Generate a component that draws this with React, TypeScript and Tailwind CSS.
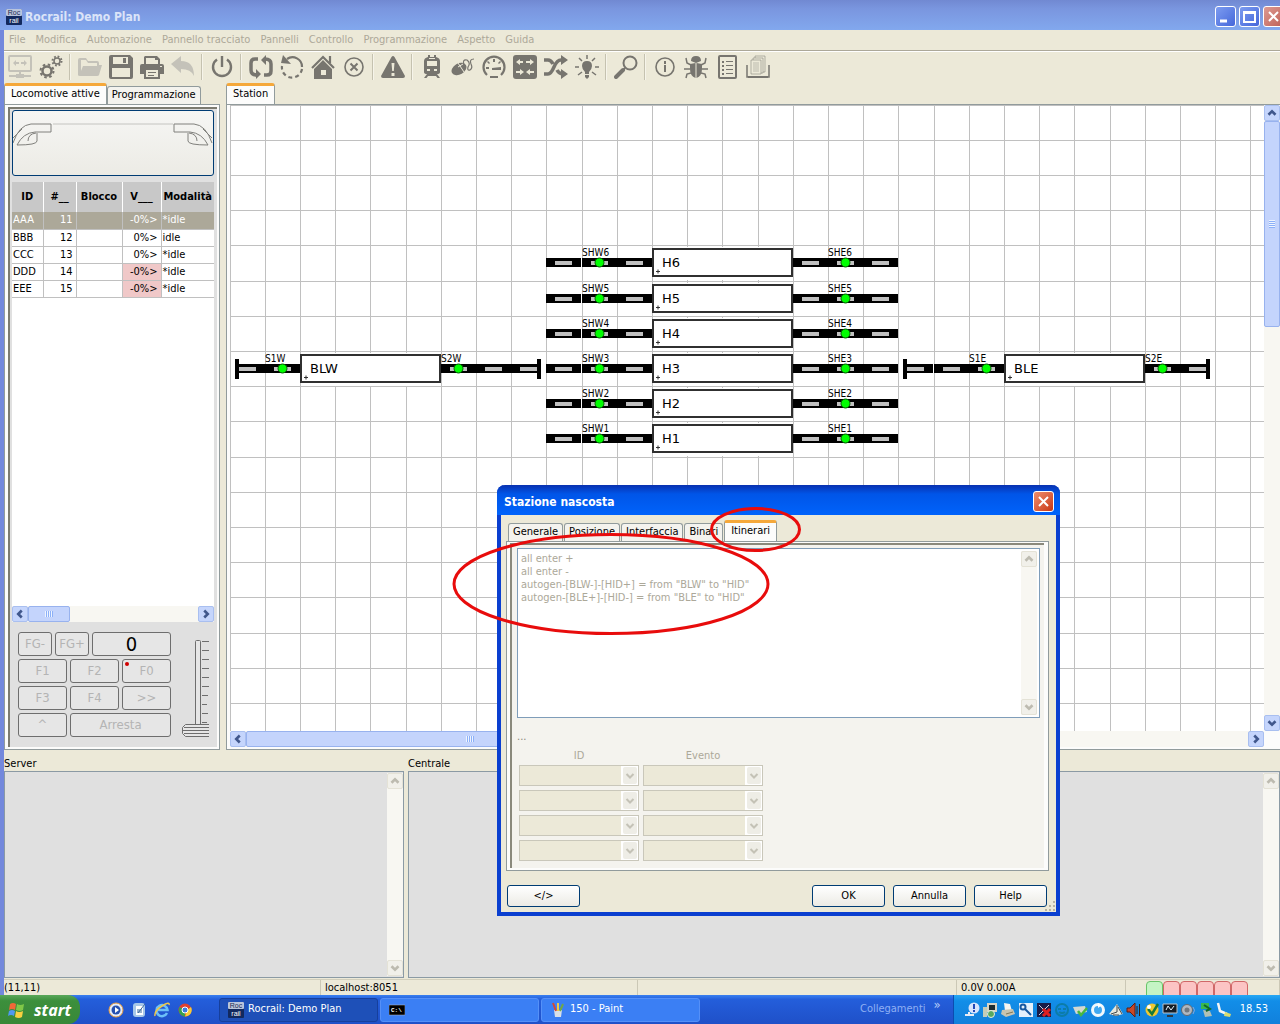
import type { ReactNode } from 'react';
import clsx from 'clsx';

const CELL = 35.2;
const cell = (n: number) => Math.floor(n * CELL);

const menus = ['File', 'Modifica', 'Automazione', 'Pannello tracciato', 'Pannelli', 'Controllo', 'Programmazione', 'Aspetto', 'Guida'];

const locos = [
  { id: 'AAA', addr: 11, v: '-0%>', mode: '*idle', selected: true },
  { id: 'BBB', addr: 12, v: '0%>', mode: 'idle' },
  { id: 'CCC', addr: 13, v: '0%>', mode: '*idle' },
  { id: 'DDD', addr: 14, v: '-0%>', mode: '*idle', reverse: true },
  { id: 'EEE', addr: 15, v: '-0%>', mode: '*idle', reverse: true },
];

const routes = `all enter +
all enter -
autogen-[BLW-]-[HID+] = from "BLW" to "HID"
autogen-[BLE+]-[HID-] = from "BLE" to "HID"`;

/* ---------- toolbar ---------- */

type Tool = { name: string; off?: boolean; art: ReactNode };

const line = { fill: 'none', stroke: 'currentColor', strokeWidth: 2 };

const toolGroups: Tool[][] = [
  [
    {
      name: 'Connetti',
      off: true,
      art: (
        <>
          <rect x="1" y="1" width="22" height="15" rx="1" {...line} />
          <path d="M5 8l3-3v2h3v2H8v2zM19 8l-3-3v2h-3v2h3v2z" />
          <path d="M11 16h2v4h-2zM1 20h22v2H1zM8 19h8v4H8z" />
        </>
      ),
    },
    {
      name: 'Proprietà',
      art: (
        <>
          <circle cx="8" cy="16" r="4.5" {...line} strokeWidth="2.5" />
          <circle cx="8" cy="16" r="6.5" {...line} strokeDasharray="2.55 2.55" />
          <circle cx="18" cy="6" r="3" {...line} strokeWidth="1.5" />
          <circle cx="18" cy="6" r="4.5" {...line} strokeDasharray="1.77 1.77" />
        </>
      ),
    },
  ],
  [
    {
      name: 'Apri',
      off: true,
      art: <path d="M0 20V5q0-2 2-2h6l2 3h9q2 0 2 2v2h3l-3 10q-.5 1-2 1H2q-2 0-2-1zM3 16l2-5h14V8H10L8 5H3z" fillRule="evenodd" />,
    },
    {
      name: 'Salva',
      art: <path d="M3 0h18l3 3v19q0 2-2 2H2q-2 0-2-2V2q0-2 2-2zM4 2v7h15V2zm10 1h3v5h-3zM3 13v9h18v-9z" fillRule="evenodd" />,
    },
    {
      name: 'Stampa',
      art: (
        <>
          <path d="M5 1h12l3 3v5H4V2zM6 3v6h12V5h-3V3z" fillRule="evenodd" />
          <path d="M2 9h20q2 0 2 2v8h-4v-5H4v5H0v-8q0-2 2-2zm18 2v1h2v-1z" fillRule="evenodd" />
          <path d="M5 14h14v9H5z" {...line} />
          <path d="M8 17h8v1H8zM8 20h6v1H8z" />
        </>
      ),
    },
    { name: 'Annulla modifica', off: true, art: <path d="M0 9l10-8v5q13 0 13 15-3-7-13-7v4z" /> },
  ],
  [
    {
      name: 'Alimentazione',
      art: (
        <>
          <path d="M7 4.5a9 9 0 1 0 10 0" {...line} strokeWidth="2.4" />
          <path d="M10.8 1h2.4v11h-2.4z" />
        </>
      ),
    },
  ],
  [
    {
      name: 'Automatico',
      art: (
        <>
          <path d="M9 4H6Q2 4 2 8v7q0 5 6 5M15 20h3q4 0 4-4V9q0-5-6-5" {...line} strokeWidth="3.5" />
          <path d="M7 14l5 5-5 5zM17 0l-5 5 5 5z" />
        </>
      ),
    },
    {
      name: 'Ripristina',
      art: (
        <>
          <path d="M7 4a9.500 9.500 0 0 1 15 8" {...line} strokeWidth="2.200" />
          <path d="M22 14a10 10 0 0 1-20-3" {...line} strokeWidth="2.200" strokeDasharray="4 3" />
          <path d="M3 0L1 8l10 1z" />
        </>
      ),
    },
    {
      name: 'Casa',
      art: (
        <>
          <path d="M1 13L12 2l11 11M19 1v7" {...line} strokeWidth="2.200" />
          <path d="M3 14l9-9 9 9v10H3zM10 15v5h5v-5z" fillRule="evenodd" />
        </>
      ),
    },
    {
      name: 'Interrompi',
      art: (
        <>
          <circle cx="12" cy="12" r="9" {...line} strokeWidth="1.600" />
          <path d="M8.500 8.500l7 7M15.500 8.500l-7 7" {...line} />
        </>
      ),
    },
  ],
  [
    {
      name: 'Emergenza',
      art: <path d="M10.500 2q1.500-2 3 0L24 21q0 2-2 2H2q-2 0-2-2zM10.500 8l.7 8h1.600l.7-8zM10.500 18v3h3v-3z" fillRule="evenodd" />,
    },
  ],
  [
    {
      name: 'Locomotive',
      art: (
        <path
          d="M8 0h2v2h4V0h2v2q4 1 4 4v11q0 2-3 2l3 4h-2.500L16 21H8l-1.500 2H4l3-4q-3 0-3-2V6q0-3 4-4zM7 6v5h10V6zM9 3v1h6V3zM7 14v2h3v-2zm7 0v2h3v-2z"
          fillRule="evenodd"
        />
      ),
    },
    {
      name: 'Comando',
      art: (
        <>
          <ellipse cx="8" cy="14" rx="8" ry="5.500" transform="rotate(-30 8 14)" />
          <path d="M13 10q-2-6 3-5 4 3 1 7-1 4 2 3 3-2 1-6-2-5 3-5" {...line} strokeWidth="1.200" />
          <path d="M7 8l6 9M7 12l5-3" stroke="#ece9d8" strokeWidth="1" />
        </>
      ),
    },
    {
      name: 'Velocità',
      art: (
        <>
          <path d="M5 20a10.500 10.500 0 1 1 14 0" {...line} strokeWidth="2.200" />
          <path d="M10 13l9-1v3h-9zM8 21h8v2H8zM11 4h2v3h-2zM4 12h3v2H4zM6 6l2 2-1 1-2-2zM18 6l-2 2 1 1 2-2z" />
        </>
      ),
    },
    {
      name: 'Scambi',
      art: (
        <>
          <rect width="24" height="24" rx="3" />
          <path d="M3 7l4-3v2h3v2H7v2zM13 6h4V4l4 3-4 3V8h-4zM3 16h4v-2l4 3-4 3v-2H3zM13 17l4-3v2h4v2h-4v2z" fill="#ece9d8" />
        </>
      ),
    },
    {
      name: 'Itinerari',
      art: (
        <>
          <path d="M0 5h4q3 0 5 4M13 15q2 4 7 4M0 19h4q3 0 6-7t7-7h2" {...line} strokeWidth="3.500" />
          <path d="M17 0l7 5-7 5zM17 14l7 5-7 5z" />
        </>
      ),
    },
    {
      name: 'Uscite',
      art: (
        <>
          <path d="M12 6q5 0 5 5 0 3-3 6v2h-4v-2q-3-3-3-6 0-5 5-5zM10 20h4v2l-2 2-2-2z" />
          <path d="M12 0v4M4 3l3 3M20 3l-3 3M0 12h4M24 12h-4M3 20l4-3M21 20l-4-3" {...line} strokeWidth="1.500" />
        </>
      ),
    },
  ],
  [
    {
      name: 'Cerca',
      art: (
        <>
          <circle cx="16" cy="8" r="6.500" {...line} />
          <path d="M11 13l-3 3" {...line} />
          <path d="M9 15L2 22" {...line} strokeWidth="4" strokeLinecap="round" />
        </>
      ),
    },
  ],
  [
    {
      name: 'Informazioni',
      art: (
        <>
          <circle cx="12" cy="12" r="9" {...line} strokeWidth="1.600" />
          <path d="M11 6h2v3h-2zM11 10h2v7h-2z" />
        </>
      ),
    },
    {
      name: 'Debug',
      art: (
        <>
          <path d="M7 6q0-5 5-5t5 5l-5 2zM6 9l5.500-1v15Q6 21 6 14zM18 9l-5.500-1v15Q18 21 18 14z" />
          <path d="M7 10L3 8 2 3M17 10l4-2 1-5M6 14H0M18 14h6M7 18l-4 1-1 4M17 18l4 1 1 4" {...line} strokeWidth="1.500" />
        </>
      ),
    },
    {
      name: 'Registro',
      art: (
        <>
          <rect x="4" y="1" width="17" height="22" rx="1" {...line} />
          <path d="M7 6h2v2H7zM7 10h2v2H7zM7 14h2v2H7zM7 18h2v2H7zM11 6h7v1h-7zM11 10h7v1h-7zM11 14h7v1h-7zM11 18h7v1h-7z" />
        </>
      ),
    },
    {
      name: 'Documenti',
      art: (
        <>
          <path d="M1 10v12h22V10" {...line} strokeWidth="1.500" />
          <path d="M2 21h20v2H2z" />
          <path d="M5 5h10v14H5zM7 5V3h10v15h-2M9 3V1h10v16h-2" fill="none" stroke="currentColor" strokeWidth=".5" />
          <path d="M7 8h6M7 10h6M7 12h6M7 14h6M7 16h6" stroke="currentColor" strokeWidth=".4" />
        </>
      ),
    },
  ],
];

function Toolbar() {
  return (
    <div className="flex h-[31px] shrink-0 items-center overflow-hidden border-t border-white" role="toolbar">
      {toolGroups.map((group, i) => (
        <div key={i} className="flex items-center">
          {i > 0 && <div className="mx-[3px] h-[26px] w-0.5 border-l border-[#c5c2b0] bg-[#f6f4ea]" />}
          {group.map((tool) => (
            <button
              key={tool.name}
              aria-label={tool.name}
              disabled={tool.off}
              className={clsx('flex w-[31px] shrink-0 justify-center', tool.off ? 'text-[#c4c2b9]' : 'text-[#77756f]')}
            >
              <svg viewBox="0 0 24 24" className="size-6" fill="currentColor">
                {tool.art}
              </svg>
            </button>
          ))}
        </div>
      ))}
    </div>
  );
}

/* ---------- shared controls ---------- */

const chevrons = {
  up: 'M4 10l4-4 4 4',
  down: 'M4 6l4 4 4-4',
  left: 'M10 4L6 8l4 4',
  right: 'M6 4l4 4-4 4',
};

function ArrowButton({ dir, off }: { dir: keyof typeof chevrons; off?: boolean }) {
  return (
    <button
      aria-label={dir}
      disabled={off}
      className={clsx(
        'size-4 shrink-0 rounded-xs border',
        off ? 'border-[#e4e2d6] bg-[#f1f0ea] text-[#bdbbb0]' : 'border-[#a9bff0] bg-[#c5d5fc] text-[#40578c]',
      )}
    >
      <svg viewBox="0 0 16 16" className="size-full" fill="none" stroke="currentColor" strokeWidth="3">
        <path d={chevrons[dir]} />
      </svg>
    </button>
  );
}

function ScrollBar({ vertical, off, thumb }: { vertical?: boolean; off?: boolean; thumb?: string }) {
  return (
    <div className={clsx('flex shrink-0 bg-[#f8f7f2]', vertical ? 'w-4 flex-col' : 'h-4')}>
      <ArrowButton dir={vertical ? 'up' : 'left'} off={off} />
      <div className={clsx('flex min-h-0 min-w-0 flex-1', vertical && 'flex-col')}>
        {thumb && (
          <div className={clsx('flex items-center justify-center rounded-xs border border-[#98b2ee] bg-[#c4d4fc]', thumb)}>
            <svg viewBox="0 0 8 8" className={clsx('size-2', vertical && 'rotate-90')} stroke="#eef4fe">
              <path d="M.5 1v6M2.500 1v6M4.500 1v6M6.500 1v6" />
              <path d="M1.500 1v6M3.500 1v6M5.500 1v6M7.500 1v6" stroke="#8cb0f8" />
            </svg>
          </div>
        )}
      </div>
      <ArrowButton dir={vertical ? 'down' : 'right'} off={off} />
    </div>
  );
}

function Tab({ children, active }: { children: ReactNode; active?: boolean }) {
  return (
    <button
      role="tab"
      aria-selected={!!active}
      className={clsx(
        'rounded-t-[3px] border border-b-0 border-[#919b9c] whitespace-nowrap',
        active ? 'h-[21px] border-t-[3px] border-t-[#f5a83a] bg-[#fcfcfb] px-1.5 pb-1' : 'h-[18px] bg-[#f4f3ee] px-1',
      )}
    >
      {children}
    </button>
  );
}

function XpButton({ children }: { children: ReactNode }) {
  return (
    <button className="h-[22px] w-[73px] rounded-[3px] border border-[#003c74] bg-linear-to-b from-white to-[#ecebe5]">
      {children}
    </button>
  );
}

function RocrailIcon() {
  return (
    <svg viewBox="0 0 16 16" className="size-4 shrink-0" fontFamily="Liberation Sans" fontSize="7" textAnchor="middle">
      <rect width="16" height="16" rx="1" fill="#12295e" />
      <rect width="16" height="7" rx="1" fill="#b9c4dc" />
      <text x="8" y="6" fill="#1c2b52">Roc</text>
      <text x="8" y="14" fill="#fff">rail</text>
    </svg>
  );
}

/* ---------- left panel ---------- */

function LocoTable() {
  return (
    <table className="w-full table-fixed border-collapse">
      <thead>
        <tr className="h-[30px] bg-[#c8c8c8]">
          {[
            ['ID', 'w-[31px]'],
            ['#__', 'w-[33px]'],
            ['Blocco', 'w-[46px]'],
            ['V___', 'w-[39px]'],
            ['Modalità', 'w-[53px]'],
          ].map(([label, width]) => (
            <th key={label} className={clsx('border-r border-white p-0 text-center font-bold last:border-r-0', width)}>
              {label}
            </th>
          ))}
        </tr>
      </thead>
      <tbody>
        {locos.map((l) => (
          <tr
            key={l.id}
            className={clsx(
              'h-[17px] border-b border-[#c0c0c0] leading-4 *:border-r *:border-[#c0c0c0] *:p-0 *:last:border-r-0',
              l.selected && 'bg-[#aca899] text-white',
            )}
          >
            <td><span className="pl-px">{l.id}</span></td>
            <td className="text-right"><span className="pr-[3px]">{l.addr}</span></td>
            <td />
            <td className={clsx('text-right', l.reverse && 'bg-[#f0c8c8]')}><span className="pr-[3px]">{l.v}</span></td>
            <td><span className="pl-px">{l.mode}</span></td>
          </tr>
        ))}
      </tbody>
    </table>
  );
}

function Key({ children, className }: { children: ReactNode; className?: string }) {
  return (
    <button disabled className={clsx('relative h-6 rounded-[3px] border border-[#6e6e6e] bg-[#e6e6e6] text-[13px] text-[#b4b4b4]', className)}>
      {children}
    </button>
  );
}

function Throttle() {
  return (
    <div className="flex justify-between pt-2.5 pb-[9px] pl-1.5">
      <div className="flex w-[153px] flex-col gap-[3px]">
        <div className="flex gap-[3px]">
          <Key className="w-[34px]">FG-</Key>
          <Key className="w-[34px]">FG+</Key>
          <output className="flex h-6 flex-1 items-center justify-center rounded-[3px] border border-[#6e6e6e] bg-[#e6e6e6] text-xl">0</output>
        </div>
        <div className="grid grid-cols-3 gap-[3px]">
          <Key>F1</Key>
          <Key>F2</Key>
          <Key>
            F0
            <span className="absolute top-0.5 left-0.5 size-1 rounded-full bg-[#d00000]" />
          </Key>
          <Key>F3</Key>
          <Key>F4</Key>
          <Key>&gt;&gt;</Key>
          <Key>^</Key>
          <Key className="col-span-2">Arresta</Key>
        </div>
      </div>
      <div className="relative mt-2 mr-1.5 h-[98px] w-[27px]">
        <svg viewBox="0 0 27 98" className="size-full" fill="#e6e6e6" stroke="#6e6e6e">
          <rect x="13.5" y=".5" width="5" height="86" rx="1" />
          {Array.from({ length: 10 }, (_, i) => (
            <path key={i} d={`M20 ${i * 9 + 1.5}h${8 - (i % 2) * 1 - (i > 5 ? 2 : 0)}`} />
          ))}
          <path d="M27 84.500H3.500l-3 3v6l3 3H27M2 87.500h25M1 90.500h26M2 93.500h25" />
        </svg>
        <input
          type="range"
          aria-label="Velocità"
          defaultValue={0}
          className="absolute inset-0 h-full w-full appearance-none opacity-0 [writing-mode:vertical-lr] [direction:rtl]"
        />
      </div>
    </div>
  );
}

function LocoPanel() {
  return (
    <section className="flex w-[216px] shrink-0 flex-col">
      <div className="flex h-[21px] items-end" role="tablist">
        <Tab active>Locomotive attive</Tab>
        <Tab>Programmazione</Tab>
      </div>
      <div className="flex min-h-0 flex-1 flex-col border border-[#919b9c] bg-[#fcfcfb] p-0.5 pl-[3px]">
        <div className="flex min-h-0 flex-1 flex-col border-t-2 border-l-2 border-[#7c7b70] bg-[#e0e0e0] px-0.5 pt-px">
          <button
            aria-label="Immagine locomotiva"
            className="h-[66px] w-[202px] shrink-0 rounded-[3px] border border-[#003c74] bg-linear-to-b from-[#f6f6f4] to-[#ecebe5]"
          >
            <svg viewBox="0 0 200 64" className="h-16 w-full" fill="none" stroke="#80807c">
              <path d="M40 13h120" stroke="#c4c4c0" />
              <path d="M38 13H18Q6 14 0 32M38 13v8H22Q10 22 4 34q20 0 20-4v-8M9 18L0 27M15 30q0-7 8-8" />
              <path d="M161 13h20q12 1 18 19M161 13v8h16q12 1 18 13-20 0-20-4v-8M190 18l9 9M184 30q0-7-8-8" />
            </svg>
          </button>
          <div className="mt-1.5 mr-px flex min-h-0 flex-1 flex-col bg-white">
            <div className="min-h-0 flex-1 overflow-hidden">
              <LocoTable />
            </div>
            <ScrollBar thumb="w-[42px]" />
          </div>
          <Throttle />
        </div>
      </div>
    </section>
  );
}

/* ---------- track plan ---------- */

function Track({ x, y, end }: { x: number; y: number; end?: 'left' | 'right' }) {
  const left = end === 'left' ? x + 5 : x;
  return (
    <g>
      <rect x={left} y={y + 13} width={end ? 30 : 35} height="9" fill="#000" />
      <rect x={x + 9} y={y + 16} width="17" height="4" fill="#c0c0c0" />
      {end && <rect x={end === 'left' ? x + 5 : x + 26} y={y + 8} width="4" height="20" fill="#000" />}
    </g>
  );
}

function Sensor({ x, y, id }: { x: number; y: number; id: string }) {
  return (
    <g>
      <Track x={x} y={y} />
      <circle cx={x + 17.5} cy={y + 17.5} r="4.5" fill="#00ff00" stroke="#006000" />
      <text x={x} y={y + 11} fontSize="10">{id}</text>
    </g>
  );
}

function Block({ x, y, id }: { x: number; y: number; id: string }) {
  return (
    <g>
      <rect x={x + 1} y={y + 2} width="140" height="33" fill="#fff" />
      <rect x={x + 1} y={y + 4} width="139" height="27" fill="#fff" stroke="#303030" strokeWidth="2" />
      <text x={x + 10} y={y + 22} fontSize="13" fontFamily="DejaVu Sans">{id}</text>
      <path d={`M${x + 4} ${y + 26.5}h4M${x + 6} ${y + 24.5}v4`} stroke="#303030" />
    </g>
  );
}

function TrackPlan() {
  return (
    <svg className="min-h-0 w-full min-w-0 flex-1 bg-white">
      <g fill="#c0c0c0">
        {Array.from({ length: 60 }, (_, i) => (
          <g key={i}>
            <rect x={cell(i)} y="0" width="1" height="100%" />
            <rect x="0" y={cell(i)} width="100%" height="1" />
          </g>
        ))}
      </g>
      {[6, 5, 4, 3, 2, 1].map((n) => {
        const y = cell(10 - n);
        return (
          <g key={n}>
            <Track x={cell(9)} y={y} />
            <Track x={cell(11)} y={y} />
            <Sensor x={cell(10)} y={y} id={`SHW${n}`} />
            <Block x={cell(12)} y={y} id={`H${n}`} />
            <Track x={cell(16)} y={y} />
            <Track x={cell(18)} y={y} />
            <Sensor x={cell(17)} y={y} id={`SHE${n}`} />
          </g>
        );
      })}
      <Track x={0} y={cell(7)} end="left" />
      <Sensor x={cell(1)} y={cell(7)} id="S1W" />
      <Sensor x={cell(6)} y={cell(7)} id="S2W" />
      <Block x={cell(2)} y={cell(7)} id="BLW" />
      <Track x={cell(7)} y={cell(7)} />
      <Track x={cell(8)} y={cell(7)} end="right" />
      <Track x={cell(19)} y={cell(7)} end="left" />
      <Track x={cell(20)} y={cell(7)} />
      <Sensor x={cell(21)} y={cell(7)} id="S1E" />
      <Sensor x={cell(26)} y={cell(7)} id="S2E" />
      <Block x={cell(22)} y={cell(7)} id="BLE" />
      <Track x={cell(27)} y={cell(7)} end="right" />
    </svg>
  );
}

function PlanPanel() {
  return (
    <section className="flex min-w-0 flex-1 flex-col">
      <div className="flex h-[21px] items-end" role="tablist">
        <Tab active>Station</Tab>
      </div>
      <div className="flex min-h-0 flex-1 border border-r-0 border-[#919b9c] bg-[#fcfcfb] pb-0.5 pl-[3px]">
        <div className="flex min-w-0 flex-1 flex-col">
          <TrackPlan />
          <ScrollBar thumb="w-[448px]" />
        </div>
        <div className="mb-4 flex">
          <ScrollBar vertical thumb="h-[206px]" />
        </div>
      </div>
    </section>
  );
}

function LogPane({ title, className }: { title: string; className: string }) {
  return (
    <section className={clsx('flex flex-col', className)}>
      <h2 className="h-[14px] leading-[14px]">{title}</h2>
      <div className="flex flex-1 justify-end border border-[#8b9aa4] bg-[#e0e0e0] p-px pr-0">
        <ScrollBar vertical off />
      </div>
    </section>
  );
}

/* ---------- dialog ---------- */

function StationDialog() {
  return (
    <div
      role="dialog"
      aria-label="Stazione nascosta"
      className="absolute top-[485px] left-[497px] flex w-[563px] flex-col rounded-t-lg border-4 border-t-0 border-[#0a3fd0] bg-[#ece9d8]"
    >
      <div className="-mx-1 flex h-[30px] items-center justify-between rounded-t-lg bg-linear-to-b from-[#0831b0] via-[#0055e8] via-30% to-[#0063fb] pr-1.5 pl-[7px]">
        <h1 className="pt-1 text-xs leading-5 font-bold text-white">Stazione nascosta</h1>
        <button aria-label="Chiudi" className="mt-[3px] size-[21px] rounded-[3px] border border-white bg-linear-to-br from-[#ee8d6c] to-[#c8330c]">
          <svg viewBox="0 0 19 19" stroke="#fff" strokeWidth="2">
            <path d="M5 5l9 9M14 5l-9 9" />
          </svg>
        </button>
      </div>
      <div className="flex flex-col px-[5px] pt-[5px] pb-[5px]">
        <div className="flex h-[21px] items-end gap-px pl-0.5" role="tablist">
          <Tab>Generale</Tab>
          <Tab>Posizione</Tab>
          <Tab>Interfaccia</Tab>
          <Tab>Binari</Tab>
          <Tab active>Itinerari</Tab>
        </div>
        <div className="mr-0.5 border border-[#919b9c] bg-[#fcfcfb] pt-px pr-1 pb-0.5 pl-[3px]">
          <div className="border-t-2 border-l-2 border-[#8a897c] bg-[#f4f3ee] pt-[3px] pr-1 pb-[7px] pl-[5px]">
            <div className="flex h-[170px] border border-[#7f9db9] bg-white">
              <textarea
                disabled
                aria-label="Itinerari"
                defaultValue={routes}
                className="flex-1 resize-none overflow-hidden px-[3px] py-[3px] leading-[13px] text-[#aca899]"
              />
              <div className="m-0.5 flex">
                <ScrollBar vertical off />
              </div>
            </div>
            <p className="mt-3 h-4 leading-[14px] text-[#8a8878]">...</p>
            <div className="mt-[5px] grid w-[246px] grid-cols-2 gap-1 pl-0.5 text-center text-[#aca899]">
              <span className="leading-[10px]">ID</span>
              <span className="leading-[10px]">Evento</span>
              {Array.from({ length: 8 }, (_, i) => (
                <div key={i} className="relative h-[21px]">
                  <select
                    disabled
                    aria-label={`${i % 2 ? 'Evento' : 'ID'} ${Math.floor(i / 2) + 1}`}
                    className="size-full appearance-none border border-[#c9c7ba] bg-[#ece9d8] opacity-100"
                  />
                  <svg viewBox="0 0 17 19" className="pointer-events-none absolute top-px right-px h-[19px] w-[17px]">
                    <rect width="17" height="19" fill="#fff" />
                    <rect x="2" y="1" width="14" height="17" rx="2" fill="#eeede6" />
                    <path d="M5.500 8l3.500 3.500L12.500 8" fill="none" stroke="#c4c2b6" strokeWidth="2" />
                  </svg>
                </div>
              ))}
            </div>
          </div>
        </div>
        <div className="mt-[14px] flex gap-2 px-px pr-1">
          <XpButton>&lt;/&gt;</XpButton>
          <div className="flex-1" />
          <XpButton>OK</XpButton>
          <XpButton>Annulla</XpButton>
          <XpButton>Help</XpButton>
        </div>
      </div>
      <svg viewBox="0 0 12 12" className="absolute right-0 bottom-0 size-3" fill="#b8b4a2">
        <path d="M9 1h2v2H9zM5 5h2v2H5zM9 5h2v2H9zM1 9h2v2H1zM5 9h2v2H5zM9 9h2v2H9z" />
      </svg>
    </div>
  );
}

/* Hand-drawn marks around the tab and the generated routes */
function Highlights() {
  return (
    <svg viewBox="0 0 350 130" className="pointer-events-none absolute top-[505px] left-[452px] h-[130px] w-[350px]" fill="none" stroke="#e80c0c" strokeWidth="3">
      <ellipse cx="159" cy="79" rx="157" ry="49.5" />
      <ellipse cx="303.500" cy="24.500" rx="44" ry="21" />
    </svg>
  );
}

/* ---------- window frame and taskbar ---------- */

function CaptionButton({ label, close, children }: { label: string; close?: boolean; children: ReactNode }) {
  return (
    <button
      aria-label={label}
      className={clsx(
        'size-[21px] shrink-0 rounded-[3px] border border-white bg-linear-to-br',
        close ? 'from-[#dd9a92] to-[#bf6157]' : 'from-[#7d9cf0] to-[#4667da]',
      )}
    >
      <svg viewBox="0 0 19 19" fill="none" stroke="#fff" strokeWidth="2">{children}</svg>
    </button>
  );
}

function TitleBar() {
  return (
    <header className="flex h-[30px] shrink-0 items-center gap-[3px] overflow-hidden bg-linear-to-b from-[#7189d2] via-[#7a96df] via-30% to-[#82a8ee] pt-[3px] pl-1.5">
      <RocrailIcon />
      <h1 className="flex-1 text-xs leading-5 font-bold text-[#dbe4f8]">Rocrail: Demo Plan</h1>
      <div className="-mr-1 flex gap-[3px]">
        <CaptionButton label="Riduci"><path d="M4 14h7" strokeWidth="3" /></CaptionButton>
        <CaptionButton label="Ingrandisci"><path d="M4 5h11v10H4zM4 6h11" /></CaptionButton>
        <CaptionButton label="Chiudi" close><path d="M5 5l9 9M14 5l-9 9" /></CaptionButton>
      </div>
    </header>
  );
}

function StatusBar() {
  return (
    <footer className="mt-px grid h-4 shrink-0 grid-cols-[317fr_317fr_319fr_169fr_154fr] border-t border-[#d2cfbc] leading-4 whitespace-nowrap *:border-r *:border-[#cbc8b6] *:pl-1 *:first:pl-0">
      <div>(11,11)</div>
      <div>localhost:8051</div>
      <div />
      <div>0.0V 0.00A</div>
      <div className="flex overflow-hidden">
        <div className="flex pt-px pl-4">
          <span className="h-5 w-[17px] rounded-[4px] border border-[#68c468] bg-[#c4f4c4]" />
          {[1, 2, 3, 4, 5].map((n) => (
            <span key={n} className="h-5 w-[17px] rounded-[4px] border border-[#d06868] bg-[#fcc4c4]" />
          ))}
        </div>
      </div>
    </footer>
  );
}

const quickLaunch: [string, ReactNode][] = [
  ['Media Player', <><circle cx="8" cy="8" r="7" fill="#e4ecf8" stroke="#e79a3c" /><circle cx="8" cy="8" r="4.500" fill="#2550b0" /><path d="M7 5l4 3-4 3z" fill="#fff" /></>],
  ['Mostra desktop', <><rect x="2" y="1" width="12" height="14" rx="3" fill="#a8c8e8" /><path d="M5 4h7v9H5z" fill="#fff" /><path d="M6 8h5M6 10h5M7 11l7-9" stroke="#38689c" /></>],
  ['Internet Explorer', <><path d="M13 11a5.500 5.500 0 1 1 .5-3H4" fill="none" stroke="#6cc0f8" strokeWidth="2.500" /><path d="M1 14Q0 9 8 4t7-1" fill="none" stroke="#f0c848" strokeWidth="1.500" /></>],
  ['Chrome', <><circle cx="8" cy="8" r="6.500" fill="#e04030" /><path d="M2.500 5L8 8v6.500A6.500 6.500 0 0 1 2.500 5z" fill="#38a050" /><path d="M8 14.500L10 8l4-3a6.500 6.500 0 0 1-6 9.500z" fill="#f8cc38" /><circle cx="8" cy="8" r="3" fill="#3c7ce0" stroke="#fff" /></>],
];

const trayIcons: [string, ReactNode][] = [
  ['Notifica', <><circle cx="10" cy="6" r="5.500" fill="#d8e4fc" /><path d="M10 2v5M10 8v2" stroke="#2048b8" strokeWidth="2" /><path d="M1 13h9M5 10v4" stroke="#e8ecf4" strokeWidth="2" /></>],
  ['Installazione', <><path d="M5 1h10v9H5z" fill="#d8d4c4" /><path d="M7 3h6v5H7z" fill="#1c2c30" /><path d="M1 5h4v10H1z" fill="#c4ccb8" /><circle cx="9" cy="12" r="3.500" fill="#58a860" stroke="#e8f0e0" /></>],
  ['Stampante', <><path d="M4 1l6 1 2 7H5z" fill="#f4f4f0" /><path d="M2 8l11-1 2 5-9 3-5-3z" fill="#c8c4b0" /><path d="M6 12l7-2" stroke="#807858" /></>],
  ['Chiave', <><rect x="1" y="1" width="14" height="14" fill="#e4f0fc" /><circle cx="5" cy="5" r="2.500" fill="none" stroke="#1858a0" strokeWidth="2" /><path d="M7 7l6 6" stroke="#1858a0" strokeWidth="2" /></>],
  ['Monitor', <><rect x="1" y="1" width="14" height="14" fill="#181c48" /><path d="M3 3l10 10M13 3L3 13" stroke="#d0d0e0" /><path d="M7 7l7 7M14 7l-7 7" stroke="#e02020" strokeWidth="3" /></>],
  ['Rete inattiva', <g fill="none" stroke="#0c7ca8" strokeWidth="2"><circle cx="8" cy="8" r="6" /><path d="M4 7h3M9 7h3M5 10q3 2 6 0" /></g>],
  ['Disco', <><path d="M1 5l12-1 2 6-11 2z" fill="#d4d8d0" /><path d="M6 9l3 4 6-7" stroke="#48b840" strokeWidth="2.500" fill="none" /></>],
  ['Aggiornamenti', <><circle cx="8" cy="8" r="5.500" fill="#40a8f0" stroke="#f0f8fc" strokeWidth="3" /><path d="M8 1l4 2-4 3z" fill="#fff" /></>],
  ['Scheda', <><path d="M1 12L9 2l6 10-7 2z" fill="#e8e8dc" /><path d="M9 3v7l-6 2M10 5l4 7M5 13h6" stroke="#40484c" fill="none" /></>],
  ['Audio', <><path d="M1 6h3l5-5v14l-5-5H1z" fill="#c84828" stroke="#601c10" /><path d="M11 4v8M13.500 2v12" stroke="#342018" /></>],
  ['Antivirus', <><circle cx="8" cy="8" r="6.500" fill="#f0c830" /><path d="M4 7l4 5 6-10" stroke="#187838" strokeWidth="2.500" fill="none" /><circle cx="5" cy="5" r="2" fill="#fff" /></>],
  ['Schermo', <><path d="M1 2h14v9H1z" fill="#141c24" stroke="#b8c0c8" /><path d="M4 8l2-4 3 4 3-4" stroke="#e8f4fc" fill="none" /><path d="M5 14h6" stroke="#303840" strokeWidth="2" /></>],
  ['Volume', <><circle cx="7" cy="8" r="5.500" fill="#b0b8c0" stroke="#606870" /><circle cx="7" cy="8" r="2.500" fill="#707880" /><path d="M13 5q3 3 0 7" stroke="#88a8d8" fill="none" /></>],
  ['Rimozione sicura', <><path d="M3 1h8v6H3z" fill="#38b850" /><path d="M5 8l7 1 2 5-7 1z" fill="#b0c0b4" /><path d="M6 3l6 4-4 2" stroke="#106828" fill="none" strokeWidth="2" /></>],
  ['Alimentazione', <><path d="M2 1l2 8 7 3" stroke="#f4f4f4" strokeWidth="2.500" fill="none" /><path d="M9 10l6 2-1 3-6-1z" fill="#d8dc70" /></>],
];

function TaskButton({ active, children }: { active?: boolean; children: ReactNode }) {
  return (
    <button
      className={clsx(
        'flex h-6 w-[159px] items-center gap-1 rounded-[3px] border px-2 text-left text-white',
        active ? 'border-[#163f9c] bg-[#1e50b8]' : 'border-[#5590f8] bg-[#3b7ff4]',
      )}
    >
      {children}
    </button>
  );
}

function Taskbar() {
  return (
    <nav className="flex h-[29px] shrink-0 items-center bg-linear-to-b from-[#3a80f0] via-[#245edb] via-15% to-[#1f50c8]">
      <button className="flex h-full w-20 items-center gap-2 rounded-r-xl bg-linear-to-b from-[#5aa85a] via-[#3c8f3c] via-20% to-[#388838] pl-2 font-['Open_Sans',sans-serif] text-base leading-5 font-bold text-white italic">
        <svg viewBox="0 0 18 18" className="size-[18px]">
          <path d="M2 3q3-2 6 0L7 9Q4 7 1 9z" fill="#f06838" />
          <path d="M9 3q3 2 7 0l-1 6q-3 2-7 0z" fill="#80c848" />
          <path d="M1 10q3-2 6 0l-1 5q-3-2-6 0z" fill="#5098f0" />
          <path d="M8 10q3 2 7 0l-1 6q-3 2-7 0z" fill="#f8d040" />
        </svg>
        start
      </button>
      <div className="ml-7 flex w-[111px] gap-[7px]">
        {quickLaunch.map(([name, art]) => (
          <button key={name} aria-label={name}>
            <svg viewBox="0 0 16 16" className="size-4">{art}</svg>
          </button>
        ))}
      </div>
      <div className="flex flex-1 gap-0.5">
        <TaskButton active><RocrailIcon />Rocrail: Demo Plan</TaskButton>
        <TaskButton>
          <svg viewBox="0 0 16 16" className="size-4" aria-label="Prompt dei comandi">
            <rect y="3" width="16" height="10" fill="#000" stroke="#b8b8b8" strokeWidth=".5" />
            <text x="2" y="10" fill="#fff" fontSize="6" fontFamily="Liberation Mono" fontWeight="bold">C:\</text>
          </svg>
        </TaskButton>
        <TaskButton>
          <svg viewBox="0 0 16 16" className="size-4">
            <path d="M4 8h8l-1 7H5z" fill="#d8e0e8" />
            <path d="M6 9L3 1" stroke="#d84830" strokeWidth="2" />
            <path d="M8 9V1" stroke="#f0c848" strokeWidth="2" />
            <path d="M10 9l3-7" stroke="#70a848" strokeWidth="2" />
          </svg>
          150 - Paint
        </TaskButton>
      </div>
      <span className="text-[#8fb0f4]">Collegamenti</span>
      <span className="mr-3 ml-2 pb-2.5 text-[13px] text-[#b4ccf8]">»</span>
      <div className="flex h-full items-center gap-0.5 border-l border-[#0c4cb0] bg-linear-to-b from-[#28a8f4] via-[#128ee8] via-20% to-[#1180dc] pr-3 pl-2.5 text-white">
        {trayIcons.map(([name, art]) => (
          <svg key={name} viewBox="0 0 16 16" className="size-4" role="img" aria-label={name}>{art}</svg>
        ))}
        <time className="pl-1.5">18.53</time>
      </div>
    </nav>
  );
}

export default function App() {
  return (
    <div className="relative flex h-screen flex-col overflow-hidden bg-[#ece9d8] font-['DejaVu_Sans_Condensed','DejaVu_Sans',sans-serif] text-[11px] text-black">
      <TitleBar />
      <main className="flex min-h-0 flex-1 flex-col border-l-4 border-[#7388dc]">
        <div className="flex h-[21px] shrink-0 items-center gap-2.5 border-b border-[#aca899] pl-[5px] text-[#aca899]" role="menubar">
          {menus.map((m) => (
            <button key={m} role="menuitem">{m}</button>
          ))}
        </div>
        <Toolbar />
        <div className="mt-px flex min-h-0 flex-1 gap-1.5">
          <LocoPanel />
          <PlanPanel />
        </div>
        <div className="mt-[7px] flex h-[221px] shrink-0 gap-1">
          <LogPane title="Server" className="w-[400px]" />
          <LogPane title="Centrale" className="min-w-0 flex-1" />
        </div>
        <StatusBar />
      </main>
      <Taskbar />
      <StationDialog />
      <Highlights />
    </div>
  );
}
